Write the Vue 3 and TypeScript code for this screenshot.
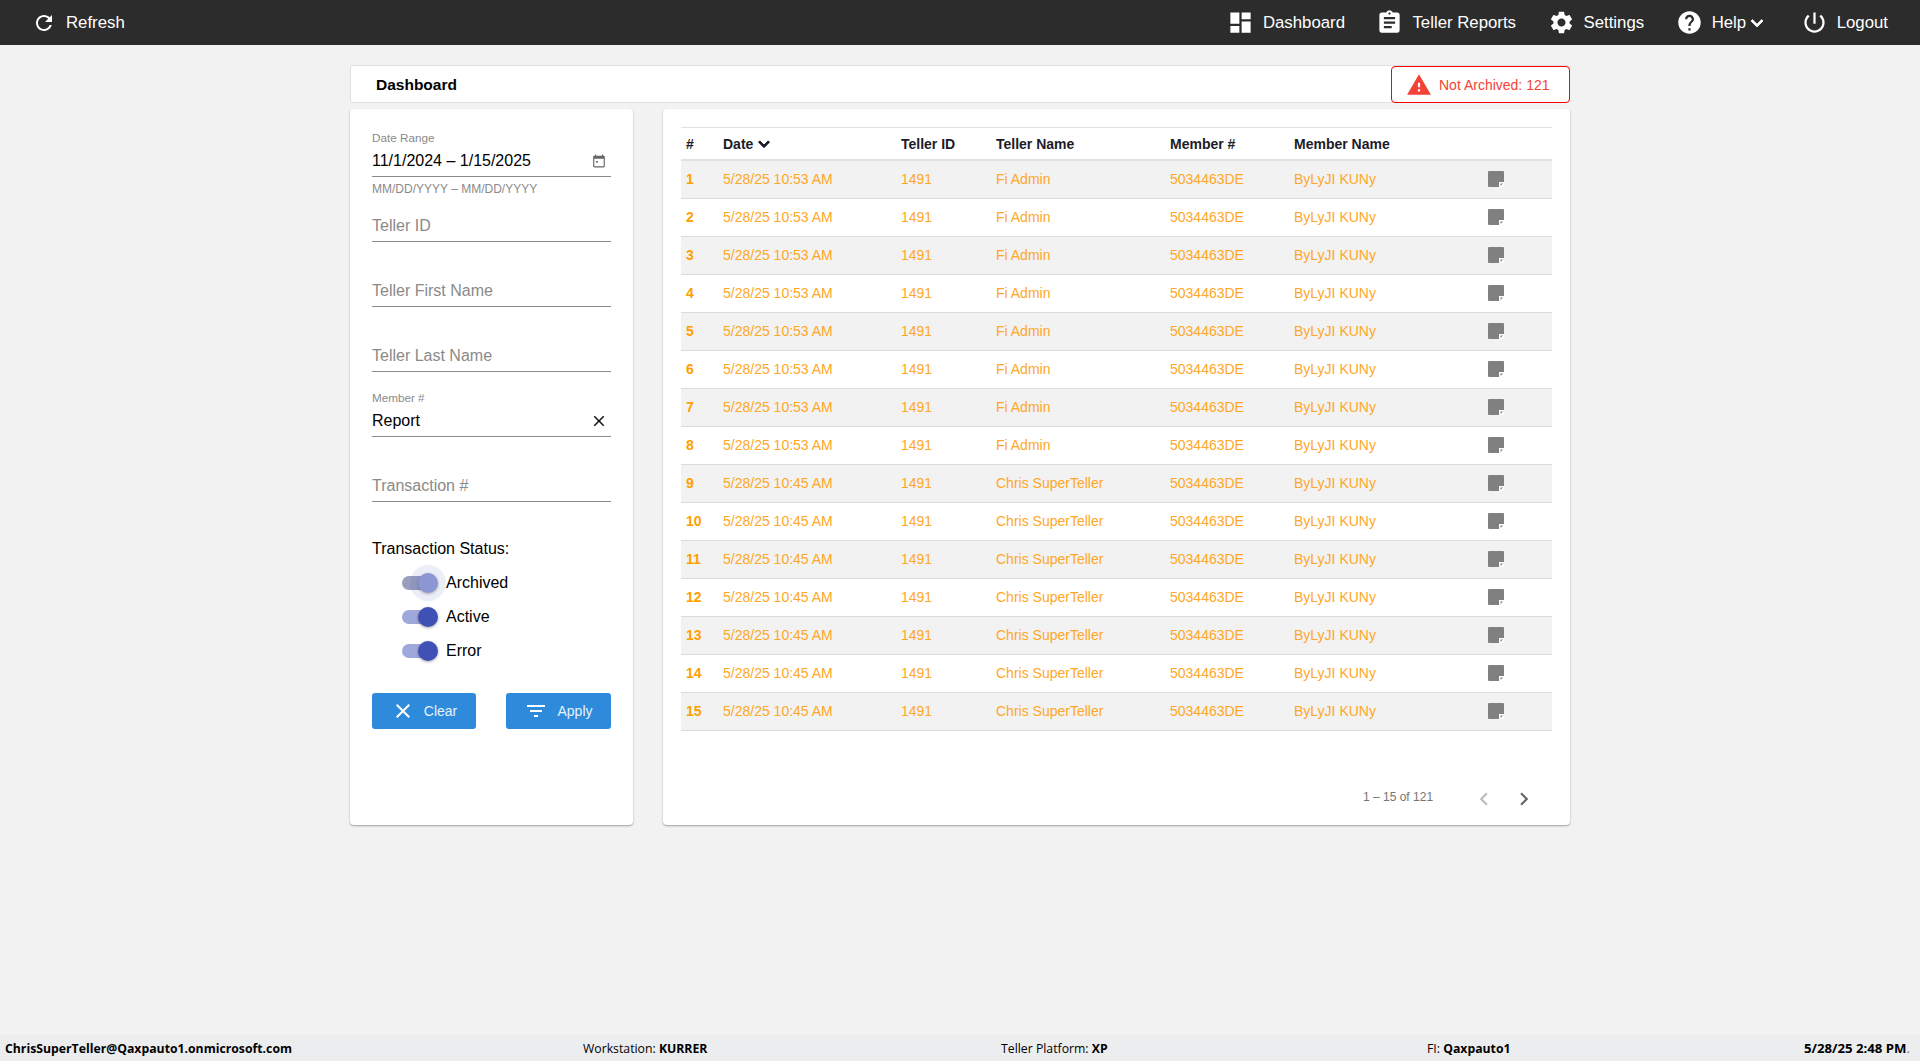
<template>
  <div class="page">
    <header class="topbar">
      <a class="nav-item refresh">
        <svg class="ic" viewBox="0 0 24 24"><path :d="icons.refresh" /></svg>
        Refresh
      </a>
      <nav class="nav">
        <a v-for="item in navItems" :key="item.label" class="nav-item">
          <svg class="ic" viewBox="0 0 24 24"><path :d="item.icon" /></svg>
          <span>{{ item.label }}</span>
          <svg v-if="item.menu" class="caret" viewBox="0 0 24 24"><path :d="icons.down" /></svg>
        </a>
      </nav>
    </header>

    <main class="content">
      <div class="titlebar">
        <h1>Dashboard</h1>
        <button class="alert">
          <svg viewBox="0 0 24 24"><path :d="icons.warning" /></svg>
          Not Archived: 121
        </button>
      </div>

      <div class="columns">
        <aside class="card filters">
          <div class="field">
            <div class="control">
              <label>Date Range</label>
              <div class="value">
                <span>11/1/2024 – 1/15/2025</span>
                <svg class="cal" viewBox="0 0 24 24"><path :d="icons.calendar" /></svg>
              </div>
            </div>
            <div class="hint">MM/DD/YYYY – MM/DD/YYYY</div>
          </div>
          <div v-for="name in ['Teller ID', 'Teller First Name', 'Teller Last Name']" :key="name" class="field">
            <div class="control">
              <div class="value placeholder">{{ name }}</div>
            </div>
          </div>
          <div class="field">
            <div class="control">
              <label>Member #</label>
              <div class="value">
                <span>Report</span>
                <svg class="clear-x" viewBox="0 0 24 24"><path :d="icons.close" /></svg>
              </div>
            </div>
          </div>
          <div class="field">
            <div class="control">
              <div class="value placeholder">Transaction #</div>
            </div>
          </div>

          <div class="status-title">Transaction Status:</div>
          <div class="toggles">
            <div v-for="(s, i) in statuses" :key="s" class="toggle" :class="{ focused: i === 0 }">
              <span class="switch"><span class="track"></span><span class="thumb"></span></span>
              <span>{{ s }}</span>
            </div>
          </div>

          <div class="actions">
            <button class="btn clear">
              <svg viewBox="0 0 24 24"><path :d="icons.close" /></svg>
              Clear
            </button>
            <button class="btn apply">
              <svg viewBox="0 0 24 24"><path :d="icons.filter" /></svg>
              Apply
            </button>
          </div>
        </aside>

        <section class="card results">
          <table>
            <colgroup>
              <col style="width: 37px" />
              <col style="width: 178px" />
              <col style="width: 95px" />
              <col style="width: 174px" />
              <col style="width: 124px" />
              <col style="width: 195px" />
              <col />
            </colgroup>
            <thead>
              <tr>
                <th>#</th>
                <th>Date<svg class="sort" viewBox="0 0 24 24"><path :d="icons.down" /></svg></th>
                <th>Teller ID</th>
                <th>Teller Name</th>
                <th>Member #</th>
                <th>Member Name</th>
                <th></th>
              </tr>
            </thead>
            <tbody>
              <tr v-for="row in rows" :key="row.n">
                <td class="num">{{ row.n }}</td>
                <td>{{ row.date }}</td>
                <td>1491</td>
                <td>{{ row.teller }}</td>
                <td>5034463DE</td>
                <td>ByLyJI KUNy</td>
                <td class="note">
                  <svg viewBox="0 0 16 16">
                    <path d="M1 0H15a1 1 0 0 1 1 1V11H11V16H1a1 1 0 0 1-1-1V1a1 1 0 0 1 1-1z" />
                    <rect class="fold" x="11" y="11" width="5" height="5" />
                    <path d="M12.5 12.5H15L12.5 15z" />
                  </svg>
                </td>
              </tr>
            </tbody>
          </table>
          <div class="pager">
            <span>1 – 15 of 121</span>
            <svg class="prev" viewBox="0 0 24 24"><path :d="icons.left" /></svg>
            <svg class="next" viewBox="0 0 24 24"><path :d="icons.right" /></svg>
          </div>
        </section>
      </div>
    </main>

    <footer class="statusbar">
      <b>ChrisSuperTeller@Qaxpauto1.onmicrosoft.com</b>
      <span>Workstation: <b>KURRER</b></span>
      <span>Teller Platform: <b>XP</b></span>
      <span>FI: <b>Qaxpauto1</b></span>
      <span class="clock"><b>5/28/25 2:48 PM</b>.</span>
    </footer>
  </div>
</template>

<script setup lang="ts">
const icons = {
  refresh: 'M17.65 6.35C16.2 4.9 14.21 4 12 4c-4.42 0-7.99 3.58-7.99 8s3.57 8 7.99 8c3.73 0 6.84-2.55 7.73-6h-2.08c-.82 2.33-3.04 4-5.65 4-3.31 0-6-2.69-6-6s2.69-6 6-6c1.66 0 3.14.69 4.22 1.78L13 11h7V4l-2.35 2.35z',
  dashboard: 'M3 13h8V3H3v10zm0 8h8v-6H3v6zm10 0h8V11h-8v10zm0-18v6h8V3h-8z',
  reports: 'M19 3h-4.18C14.4 1.84 13.3 1 12 1c-1.3 0-2.4.84-2.82 2H5c-1.1 0-2 .9-2 2v14c0 1.1.9 2 2 2h14c1.1 0 2-.9 2-2V5c0-1.1-.9-2-2-2zm-7 0c.55 0 1 .45 1 1s-.45 1-1 1-1-.45-1-1 .45-1 1-1zm2 14H7v-2h7v2zm3-4H7v-2h10v2zm0-4H7V7h10v2z',
  settings: 'M19.14 12.94c.04-.3.06-.61.06-.94 0-.32-.02-.64-.07-.94l2.03-1.58c.18-.14.23-.41.12-.61l-1.92-3.32c-.12-.22-.37-.29-.59-.22l-2.39.96c-.5-.38-1.03-.7-1.62-.94l-.36-2.54c-.04-.24-.24-.41-.48-.41h-3.84c-.24 0-.43.17-.47.41l-.36 2.54c-.59.24-1.13.57-1.62.94l-2.39-.96c-.22-.08-.47 0-.59.22L2.74 8.87c-.12.21-.08.47.12.61l2.03 1.58c-.05.3-.09.63-.09.94s.02.64.07.94l-2.03 1.58c-.18.14-.23.41-.12.61l1.92 3.32c.12.22.37.29.59.22l2.39-.96c.5.38 1.03.7 1.62.94l.36 2.54c.05.24.24.41.48.41h3.84c.24 0 .44-.17.47-.41l.36-2.54c.59-.24 1.13-.56 1.62-.94l2.39.96c.22.08.47 0 .59-.22l1.92-3.32c.12-.22.07-.47-.12-.61l-2.01-1.58zM12 15.6c-1.98 0-3.6-1.62-3.6-3.6s1.62-3.6 3.6-3.6 3.6 1.62 3.6 3.6-1.62 3.6-3.6 3.6z',
  help: 'M12 2C6.48 2 2 6.48 2 12s4.48 10 10 10 10-4.48 10-10S17.52 2 12 2zm1 17h-2v-2h2v2zm2.07-7.75l-.9.92C13.45 12.9 13 13.5 13 15h-2v-.5c0-1.1.45-2.1 1.17-2.83l1.24-1.26c.37-.36.59-.86.59-1.41 0-1.1-.9-2-2-2s-2 .9-2 2H8c0-2.21 1.79-4 4-4s4 1.79 4 4c0 .88-.36 1.68-.93 2.25z',
  power: 'M13 3h-2v10h2V3zm4.83 2.17l-1.42 1.42C17.99 7.86 19 9.81 19 12c0 3.87-3.13 7-7 7s-7-3.13-7-7c0-2.19 1.01-4.14 2.58-5.42L6.17 5.17C4.23 6.82 3 9.26 3 12c0 4.97 4.03 9 9 9s9-4.03 9-9c0-2.74-1.23-5.18-3.17-6.83z',
  warning: 'M1 21h22L12 2 1 21zm12-3h-2v-2h2v2zm0-4h-2v-4h2v4z',
  calendar: 'M20 3h-1V1h-2v2H7V1H5v2H4c-1.1 0-2 .9-2 2v16c0 1.1.9 2 2 2h16c1.1 0 2-.9 2-2V5c0-1.1-.9-2-2-2zm0 18H4V8h16v13zM10 12H7v3h3z',
  close: 'M19 6.41L17.59 5 12 10.59 6.41 5 5 6.41 10.59 12 5 17.59 6.41 19 12 13.41 17.59 19 19 17.59 13.41 12z',
  filter: 'M10 18h4v-2h-4v2zM3 6v2h18V6H3zm3 7h12v-2H6v2z',
  down: 'M7.41 8.59L12 13.17l4.59-4.58L18 10l-6 6-6-6 1.41-1.41z',
  left: 'M15.41 7.41L14 6l-6 6 6 6 1.41-1.41L10.83 12z',
  right: 'M10 6L8.59 7.41 13.17 12l-4.58 4.59L10 18l6-6z',
}

const navItems = [
  { label: 'Dashboard', icon: icons.dashboard },
  { label: 'Teller Reports', icon: icons.reports },
  { label: 'Settings', icon: icons.settings },
  { label: 'Help', icon: icons.help, menu: true },
  { label: 'Logout', icon: icons.power },
]

const statuses = ['Archived', 'Active', 'Error']

const rows = Array.from({ length: 15 }, (_, i) => ({
  n: i + 1,
  date: i < 8 ? '5/28/25 10:53 AM' : '5/28/25 10:45 AM',
  teller: i < 8 ? 'Fi Admin' : 'Chris SuperTeller',
}))
</script>

<style>
html,
body {
  margin: 0;
  background: #f2f2f2;
}
</style>

<style scoped>
.page {
  height: 1061px;
  display: flex;
  flex-direction: column;
  font-family: "Liberation Sans", Arial, sans-serif;
  background: #f2f2f2;
  color: #000;
  overflow: hidden;
}

.topbar {
  height: 45px;
  flex: none;
  display: flex;
  align-items: center;
  justify-content: space-between;
  padding: 0 32px;
  background: #2c2c2c;
  color: #fff;
  font-size: 16.8px;
}
.nav {
  display: flex;
  align-items: center;
  gap: 31.5px;
}
.nav-item {
  display: flex;
  align-items: center;
  gap: 9px;
  color: #fff;
}
.ic {
  width: 27px;
  height: 27px;
  fill: #fff;
}
.refresh {
  gap: 10px;
}
.refresh .ic {
  width: 24px;
  height: 24px;
}
.caret {
  width: 24px;
  height: 24px;
  fill: #fff;
  stroke: #fff;
  stroke-width: 0.8;
  margin-left: -10px;
}

.content {
  width: 1220px;
  margin: 20px 0 0 350px;
  flex: 1;
}
.titlebar {
  height: 38px;
  box-sizing: border-box;
  display: flex;
  align-items: center;
  justify-content: space-between;
  background: #fff;
  border: 1px solid #e0e0e0;
  border-radius: 3px;
  padding-left: 25px;
}
.titlebar h1 {
  margin: 1px 0 0;
  font-size: 15.5px;
  font-weight: 700;
}
.alert {
  width: 179px;
  height: 37px;
  margin: 1px -1px 0 0;
  box-sizing: border-box;
  display: flex;
  align-items: center;
  gap: 7px;
  padding: 0 0 0 14px;
  background: #fff;
  border: 1px solid #f00;
  border-radius: 4px;
  color: #f44336;
  font: 14px "Liberation Sans", Arial, sans-serif;
}
.alert svg {
  width: 26px;
  height: 26px;
  fill: #f44336;
}

.columns {
  display: flex;
  gap: 30px;
  margin-top: 6px;
}
.card {
  height: 716px;
  box-sizing: border-box;
  background: #fff;
  border-radius: 4px;
  box-shadow: 0 1px 2px rgba(0, 0, 0, 0.35);
}

.filters {
  width: 283px;
  flex: none;
  padding: 25px 22px 0;
}
.field {
  height: 65px;
}
.control {
  height: 43px;
  box-sizing: border-box;
  border-bottom: 1px solid #8c8c8c;
  display: flex;
  flex-direction: column;
  justify-content: flex-end;
}
.control label {
  flex: none;
  font-size: 11.7px;
  line-height: 14px;
  margin-bottom: 4px;
  color: #8a8a8a;
}
.value {
  flex: none;
  height: 24px;
  margin-bottom: 3px;
  display: flex;
  align-items: center;
  justify-content: space-between;
  font-size: 16px;
}
.placeholder {
  color: #8a8a8a;
}
.cal {
  width: 14px;
  height: 14px;
  fill: #666;
  margin-right: 5px;
}
.clear-x {
  width: 18px;
  height: 18px;
  fill: #111;
  margin-right: 3px;
}
.hint {
  margin-top: 5px;
  font-size: 12px;
  line-height: 14px;
  color: #8a8a8a;
}

.status-title {
  margin-top: 15px;
  font-size: 16px;
  line-height: 20px;
}
.toggles {
  margin-top: 7px;
  padding-left: 30px;
}
.toggle {
  height: 34px;
  display: flex;
  align-items: center;
  gap: 8px;
  font-size: 16px;
}
.switch {
  position: relative;
  width: 36px;
  height: 20px;
}
.track {
  position: absolute;
  left: 0;
  top: 3px;
  width: 34px;
  height: 14px;
  border-radius: 7px;
  background: #9fa8da;
}
.thumb {
  position: absolute;
  right: 0;
  top: 0;
  width: 20px;
  height: 20px;
  border-radius: 50%;
  background: #3f51b5;
  box-shadow: 0 1px 3px rgba(0, 0, 0, 0.35);
}
.focused .track {
  background: #9a9fbe;
}
.focused .thumb {
  background: #8c96d2;
  box-shadow: 0 0 0 8px rgba(63, 81, 181, 0.1), 0 1px 3px rgba(0, 0, 0, 0.3);
}

.actions {
  display: flex;
  justify-content: space-between;
  margin-top: 25px;
}
.btn {
  height: 36px;
  border: 0;
  border-radius: 3px;
  display: flex;
  align-items: center;
  justify-content: center;
  gap: 9px;
  background: #2e8bdb;
  color: #e6f2fb;
  font: 14px "Liberation Sans", Arial, sans-serif;
}
.btn svg {
  width: 24px;
  height: 24px;
  fill: #fff;
}
.clear {
  width: 104px;
}
.apply {
  width: 105px;
}

.results {
  flex: 1;
  padding: 18px 18px 0;
}
table {
  width: 100%;
  table-layout: fixed;
  border-collapse: collapse;
  font-size: 14px;
}
th {
  height: 31px;
  padding: 0 0 0 5px;
  text-align: left;
  font-size: 14px;
  font-weight: 700;
  color: #1c1c28;
  border-top: 1px solid #dee2e6;
  border-bottom: 2px solid #dee2e6;
}
.sort {
  width: 22px;
  height: 22px;
  vertical-align: -6px;
  fill: #1c1c28;
  stroke: #1c1c28;
  stroke-width: 1;
}
td {
  height: 38px;
  box-sizing: border-box;
  padding: 0 0 0 5px;
  color: #ffa726;
  border-bottom: 1px solid #dcdcdc;
}
tbody tr:nth-child(odd) {
  background: #f2f2f2;
}
td.num {
  font-weight: 700;
  color: #ffa000;
}
td.note {
  padding-left: 4px;
}
.note svg {
  display: block;
  width: 16px;
  height: 16px;
  fill: #808080;
}
.note .fold {
  fill: #fff;
}

.pager {
  display: flex;
  align-items: center;
  margin-top: 55px;
  padding-left: 682px;
  font-size: 12px;
  color: #757575;
}
.pager span {
  margin-top: -3px;
}
.pager svg {
  width: 26px;
  height: 26px;
  flex: none;
}
.prev {
  margin-left: 38px;
  fill: #bdbdbd;
}
.next {
  margin-left: 14px;
  fill: #666;
}

.statusbar {
  height: 26px;
  flex: none;
  box-sizing: border-box;
  display: grid;
  grid-template-columns: 578px 418px 426px 376px 1fr;
  align-items: center;
  padding: 0 10px 0 5px;
  background: #ecedef;
  font-family: "Open Sans", sans-serif;
  font-size: 12.25px;
}
.statusbar b {
  font-weight: 700;
}
.clock {
  text-align: right;
  font-size: 13.2px;
  color: #777;
}
.clock b {
  color: #000;
}
</style>
